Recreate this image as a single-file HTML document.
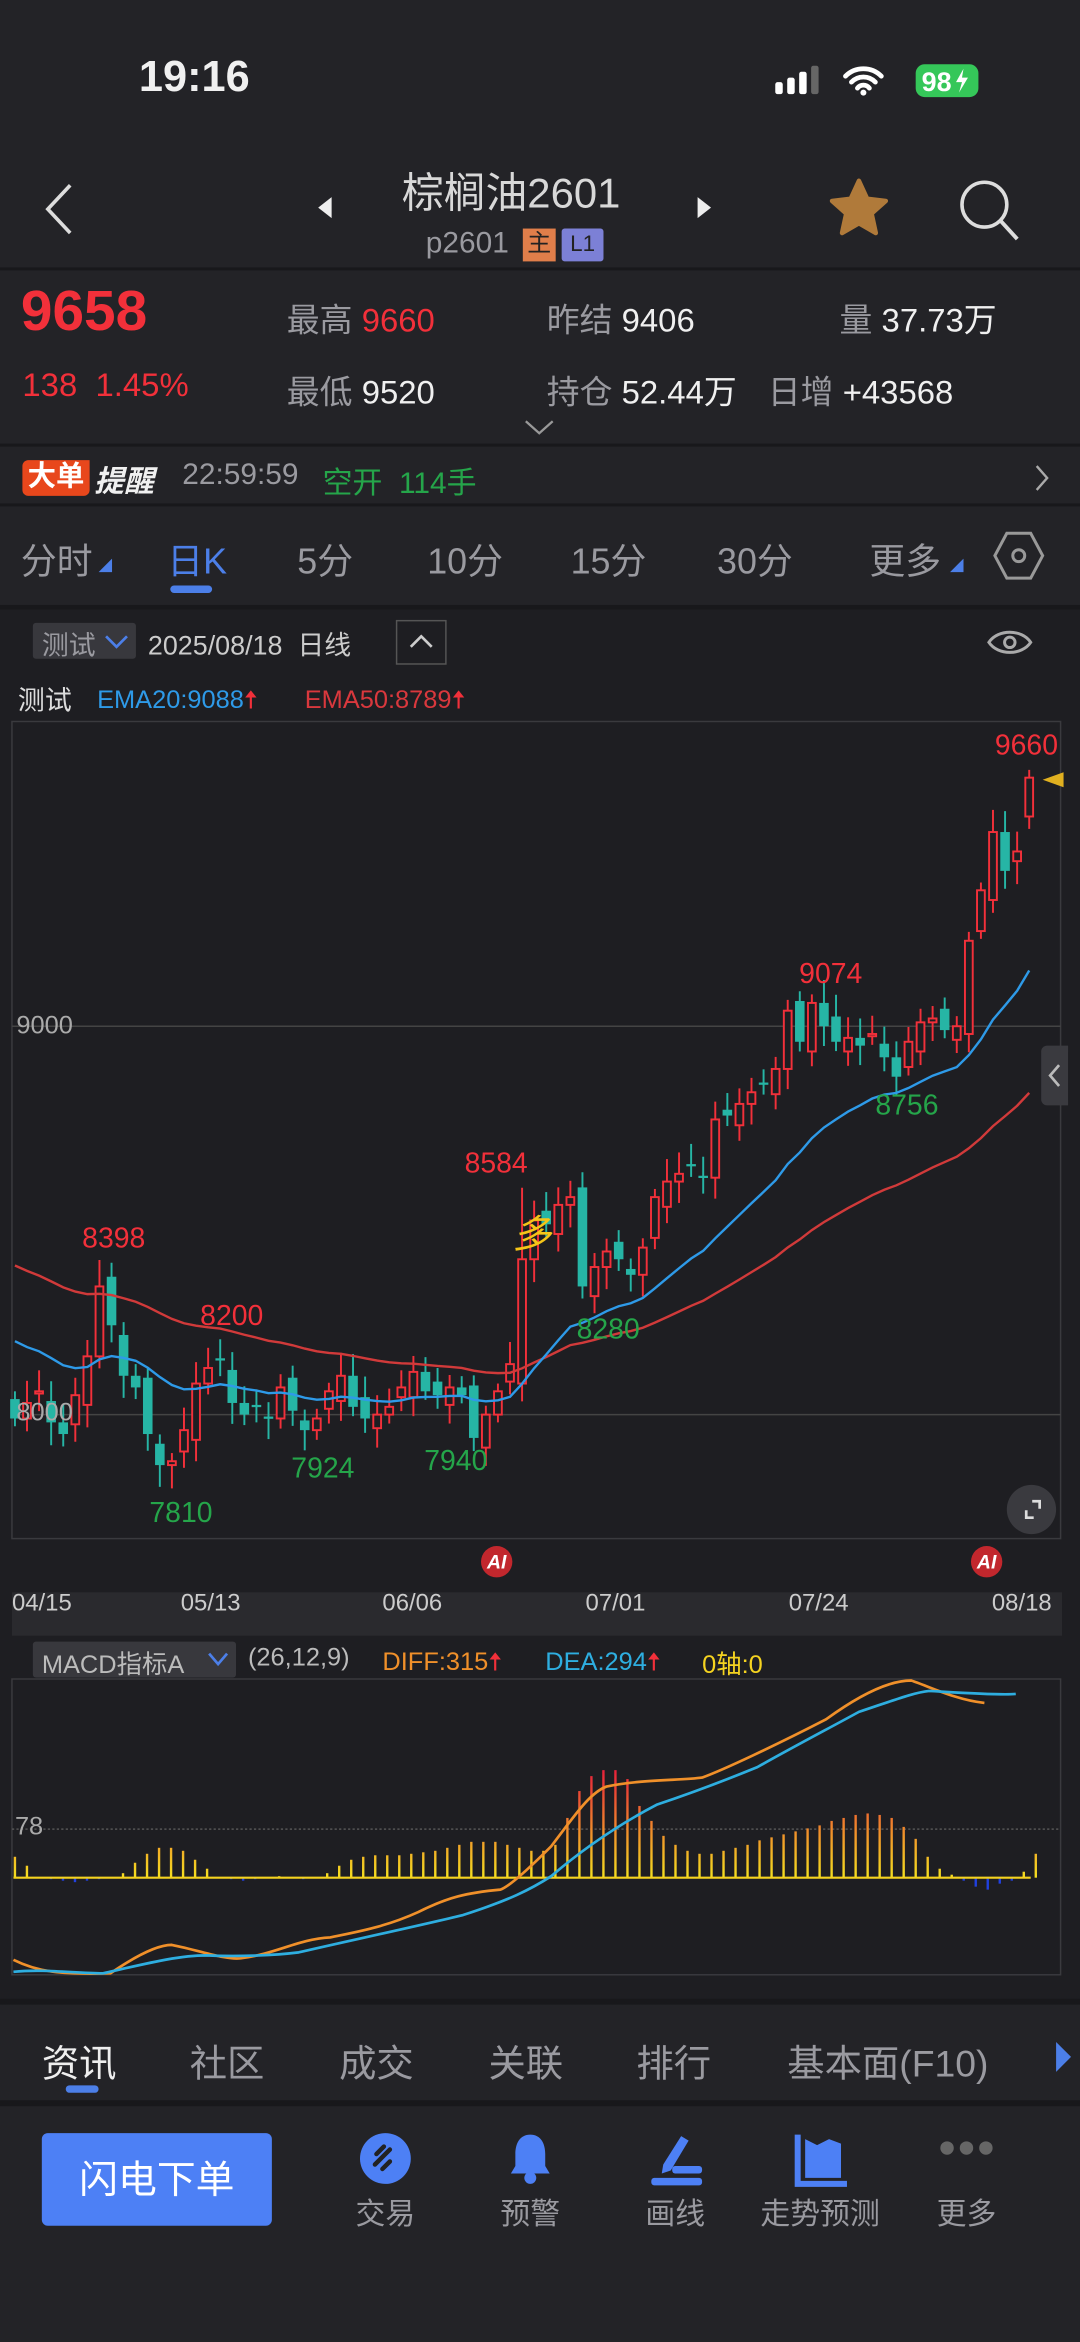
<!DOCTYPE html>
<html><head><meta charset="utf-8">
<style>
html,body{margin:0;padding:0;background:#232327;width:1080px;height:2341px;overflow:hidden}
#r{position:absolute;left:0;top:0;width:723px;height:1568px;transform:scale(1.49378);transform-origin:0 0;font-family:"Liberation Sans","Noto Sans CJK SC",sans-serif;color:#ddd}
.a{position:absolute;white-space:nowrap}
.g{color:#9a9aa0}.w{color:#f0f0f0}.red{color:#f2303a}.grn{color:#25a54a}
.hl{position:absolute;left:0;width:723px;height:2px;background:#18181b}
</style></head><body><div id="r">
<div class="a w" style="left:93px;top:36px;font-size:29px;font-weight:bold">19:16</div>
<svg class="a" style="left:518px;top:42px" width="150" height="24">
<g fill="#fff"><rect x="1" y="13" width="5" height="8" rx="1.5"/><rect x="9" y="10" width="5" height="11" rx="1.5"/><rect x="17" y="6" width="5" height="15" rx="1.5"/><rect x="25" y="2" width="5" height="19" rx="1.5" fill="#666"/></g>
<path d="M48 9a17 17 0 0 1 24 0M52 13a11 11 0 0 1 16 0M56 17a5 5 0 0 1 8 0" stroke="#fff" stroke-width="3.2" fill="none" stroke-linecap="round"/><circle cx="60" cy="20" r="2" fill="#fff"/>
<rect x="95" y="1" width="42" height="22" rx="6" fill="#35c759"/><text x="99" y="19" font-size="18" font-weight="bold" fill="#fff" font-family="Liberation Sans">98</text><path d="M127 4l-5 9h4l-2 7 6-10h-4z" fill="#fff"/>
</svg>
<svg class="a" style="left:28px;top:122px" width="24" height="36"><path d="M19 2L4 18l15 16" stroke="#ddd" stroke-width="2.4" fill="none"/></svg>
<svg class="a" style="left:212px;top:131px" width="12" height="16"><path d="M10 1v14L1 8z" fill="#eee"/></svg>
<svg class="a" style="left:466px;top:131px" width="12" height="16"><path d="M1 1v14l9-7z" fill="#eee"/></svg>
<div class="a" style="left:269px;top:108px;font-size:28px;color:#d8d8d8">棕榈油2601</div>
<div class="a g" style="left:285px;top:152px;font-size:20px">p2601</div>
<div class="a" style="left:350px;top:153px;width:22px;height:22px;background:#e07e4a;color:#222;font-size:16px;text-align:center;line-height:22px">主</div>
<div class="a" style="left:376px;top:153px;width:28px;height:22px;background:#7c80d6;color:#222;font-size:15px;text-align:center;line-height:22px;border-radius:2px">L1</div>
<svg class="a" style="left:554px;top:118px" width="42" height="42"><path d="M21 3l5.5 12 12.5 1.5-9.5 8.5 2.8 13L21 31.5 9.7 38l2.8-13L3 16.5 15.5 15z" fill="#b07a3a" stroke="#b07a3a" stroke-width="3" stroke-linejoin="round"/></svg>
<svg class="a" style="left:640px;top:118px" width="46" height="46"><circle cx="19" cy="19" r="15" stroke="#ddd" stroke-width="2.4" fill="none"/><path d="M30 30l11 12" stroke="#ddd" stroke-width="2.6"/></svg>
<div class="hl" style="top:179px"></div>
<div class="a red" style="left:14px;top:188px;font-size:38px;font-weight:bold">9658</div>
<div class="a red" style="left:15px;top:245px;font-size:22px">138&nbsp;&nbsp;1.45%</div>
<div class="a" style="left:192px;top:197px;font-size:22px"><span class="g">最高</span> <span class="red">9660</span></div>
<div class="a" style="left:192px;top:245px;font-size:22px"><span class="g">最低</span> <span class="w">9520</span></div>
<div class="a" style="left:366px;top:197px;font-size:22px"><span class="g">昨结</span> <span class="w">9406</span></div>
<div class="a" style="left:366px;top:245px;font-size:22px"><span class="g">持仓</span> <span class="w">52.44万</span></div>
<div class="a" style="left:562px;top:197px;font-size:22px"><span class="g">量</span> <span class="w">37.73万</span></div>
<div class="a" style="left:514px;top:245px;font-size:22px"><span class="g">日增</span> <span class="w">+43568</span></div>
<svg class="a" style="left:351px;top:280px" width="20" height="12"><path d="M1 2l9 8 9-8" stroke="#999" stroke-width="1.5" fill="none"/></svg>
<div class="hl" style="top:297px"></div>
<div class="a" style="left:15px;top:308px;width:45px;height:24px;background:#e8471c;color:#fff;font-size:19px;line-height:24px;font-weight:bold;border-radius:4px 0 4px 4px;text-align:center">大单</div>
<div class="a w" style="left:63px;top:306px;font-size:20px;font-weight:bold;font-style:italic">提醒</div>
<div class="a g" style="left:122px;top:307px;font-size:20px">22:59:59</div>
<div class="a grn" style="left:216px;top:307px;font-size:20px">空开&nbsp;&nbsp;114手</div>
<svg class="a" style="left:692px;top:310px" width="12" height="20"><path d="M2 2l7 8-7 8" stroke="#aaa" stroke-width="1.6" fill="none"/></svg>
<div class="hl" style="top:337px"></div>
<div class="a g" style="left:14px;top:356px;font-size:24px">分时</div>
<svg class="a" style="left:66px;top:374px" width="10" height="10"><path d="M9 0v9H0z" fill="#4c7fe8"/></svg>
<div class="a" style="left:112px;top:356px;font-size:24px;color:#4c7fe8">日K</div>
<div class="a" style="left:114px;top:392px;width:28px;height:5px;border-radius:3px;background:#4c7fe8"></div>
<div class="a g" style="left:199px;top:356px;font-size:24px">5分</div>
<div class="a g" style="left:286px;top:356px;font-size:24px">10分</div>
<div class="a g" style="left:382px;top:356px;font-size:24px">15分</div>
<div class="a g" style="left:480px;top:356px;font-size:24px">30分</div>
<div class="a g" style="left:582px;top:356px;font-size:24px">更多</div>
<svg class="a" style="left:636px;top:374px" width="10" height="10"><path d="M9 0v9H0z" fill="#4c7fe8"/></svg>
<svg class="a" style="left:664px;top:354px" width="36" height="36"><path d="M10 3h16l8 15-8 15H10L2 18z" stroke="#999" stroke-width="2" fill="none"/><circle cx="18" cy="18" r="4" stroke="#999" stroke-width="2" fill="none"/></svg>
<div class="hl" style="top:405px;height:3px"></div>
<div class="a" style="left:0;top:408px;width:723px;height:930px;background:#1e1e22"></div>
<div class="a" style="left:22px;top:417px;width:69px;height:24px;background:#38383d;border-radius:2px"></div>
<div class="a g" style="left:28px;top:418px;font-size:18px">测试</div>
<svg class="a" style="left:69px;top:424px" width="18" height="12"><path d="M2 2l7 7 7-7" stroke="#4c7fe8" stroke-width="1.8" fill="none"/></svg>
<div class="a" style="left:99px;top:418px;font-size:18px;color:#ccc">2025/08/18&nbsp;&nbsp;日线</div>
<div class="a" style="left:265px;top:415px;width:32px;height:28px;border:1px solid #555"></div>
<svg class="a" style="left:272px;top:422px" width="20" height="14"><path d="M3 11l7-7 7 7" stroke="#ccc" stroke-width="1.8" fill="none"/></svg>
<svg class="a" style="left:660px;top:418px" width="32" height="24"><path d="M2 12C8 3 24 3 30 12 24 21 8 21 2 12z" stroke="#aaa" stroke-width="2" fill="none"/><circle cx="16" cy="12" r="3.5" stroke="#aaa" stroke-width="2" fill="none"/></svg>
<div class="a" style="left:12px;top:455px;font-size:18px;color:#ddd">测试</div>
<div class="a" style="left:65px;top:456px;font-size:17px;color:#2e9ae8">EMA20:9088<span style="color:#f2303a">🠅</span></div>
<div class="a" style="left:204px;top:456px;font-size:17px;color:#d9383d">EMA50:8789<span style="color:#f2303a">🠅</span></div>
<svg id="ch" class="a" style="left:0;top:0" width="723" height="1568"></svg>
<div class="a" style="left:11px;top:677px;font-size:17px;color:#aaa">9000</div>
<div class="a" style="left:11px;top:936px;font-size:17px;color:#aaa">8000</div>
<div class="a red" style="left:666px;top:489px;font-size:19px">9660</div>
<div class="a red" style="left:55px;top:819px;font-size:19px">8398</div>
<div class="a red" style="left:134px;top:871px;font-size:19px">8200</div>
<div class="a red" style="left:311px;top:769px;font-size:19px">8584</div>
<div class="a red" style="left:535px;top:642px;font-size:19px">9074</div>
<div class="a grn" style="left:100px;top:1003px;font-size:19px">7810</div>
<div class="a grn" style="left:195px;top:973px;font-size:19px">7924</div>
<div class="a grn" style="left:284px;top:968px;font-size:19px">7940</div>
<div class="a grn" style="left:386px;top:880px;font-size:19px">8280</div>
<div class="a grn" style="left:586px;top:730px;font-size:19px">8756</div>
<div class="a" style="left:343px;top:806px;font-size:26px;color:#f5c518;font-style:italic">多</div>
<div class="a" style="left:697px;top:700px;width:18px;height:40px;background:#3a3a3f;border-radius:4px 0 0 4px"></div>
<svg class="a" style="left:700px;top:710px" width="12" height="20"><path d="M9 3L3 10l6 7" stroke="#bbb" stroke-width="1.8" fill="none"/></svg>
<div class="a" style="left:674px;top:994px;width:33px;height:33px;border-radius:50%;background:#3a3a3f"></div>
<svg class="a" style="left:681px;top:1001px" width="20" height="20"><path d="M6 10v5h5M10 4h5v5" stroke="#ddd" stroke-width="1.8" fill="none"/></svg>
<div class="a" style="left:322px;top:1035px;width:21px;height:21px;border-radius:50%;background:#c2272d;color:#fff;font-size:13px;font-weight:bold;font-style:italic;text-align:center;line-height:21px">AI</div>
<div class="a" style="left:650px;top:1035px;width:21px;height:21px;border-radius:50%;background:#c2272d;color:#fff;font-size:13px;font-weight:bold;font-style:italic;text-align:center;line-height:21px">AI</div>
<div class="a" style="left:8px;top:1066px;width:703px;height:29px;background:#2a2a2e"></div>
<div class="a" style="left:8px;top:1065px;font-size:16px;color:#ccc">04/15</div>
<div class="a" style="left:121px;top:1065px;font-size:16px;color:#ccc">05/13</div>
<div class="a" style="left:256px;top:1065px;font-size:16px;color:#ccc">06/06</div>
<div class="a" style="left:392px;top:1065px;font-size:16px;color:#ccc">07/01</div>
<div class="a" style="left:528px;top:1065px;font-size:16px;color:#ccc">07/24</div>
<div class="a" style="left:664px;top:1065px;font-size:16px;color:#ccc">08/18</div>
<div class="a" style="left:22px;top:1099px;width:136px;height:24px;background:#38383d;border-radius:2px"></div>
<div class="a" style="left:28px;top:1100px;font-size:17px;color:#bbb">MACD指标A</div>
<svg class="a" style="left:138px;top:1105px" width="16" height="12"><path d="M2 2l6 7 6-7" stroke="#4c7fe8" stroke-width="1.8" fill="none"/></svg>
<div class="a" style="left:166px;top:1100px;font-size:17px;color:#bbb">(26,12,9)</div>
<div class="a" style="left:256px;top:1100px;font-size:17px;color:#f0902a">DIFF:315<span style="color:#f2303a">🠅</span></div>
<div class="a" style="left:365px;top:1100px;font-size:17px;color:#2eaee0">DEA:294<span style="color:#f2303a">🠅</span></div>
<div class="a" style="left:470px;top:1100px;font-size:17px;color:#f5d320">0轴:0</div>
<div class="a" style="left:10px;top:1213px;font-size:17px;color:#aaa">78</div>
<div class="a" style="left:0;top:1338px;width:723px;height:4px;background:#18181b"></div>
<div class="a" style="left:28px;top:1362px;font-size:25px;color:#eee">资讯</div>
<div class="a g" style="left:127px;top:1362px;font-size:25px">社区</div>
<div class="a g" style="left:227px;top:1362px;font-size:25px">成交</div>
<div class="a g" style="left:327px;top:1362px;font-size:25px">关联</div>
<div class="a g" style="left:426px;top:1362px;font-size:25px">排行</div>
<div class="a g" style="left:527px;top:1362px;font-size:25px">基本面(F10)</div>
<svg class="a" style="left:706px;top:1366px" width="12" height="22"><path d="M1 1v20l10-10z" fill="#4c7fe8"/></svg>
<div class="a" style="left:44px;top:1396px;width:22px;height:5px;border-radius:3px;background:#4c7fe8"></div>
<div class="a" style="left:0;top:1406px;width:723px;height:4px;background:#18181b"></div>
<div class="a" style="left:28px;top:1428px;width:154px;height:62px;background:#4d80f5;border-radius:4px;color:#fff;font-size:26px;text-align:center;line-height:62px">闪电下单</div>
<svg class="a" style="left:240px;top:1427px" width="36" height="36"><circle cx="18" cy="18" r="17" fill="#4d80f5"/><path d="M12 15l5-5M11 22l10-10M16 25l5-5" stroke="#222" stroke-width="3" stroke-linecap="round"/></svg>
<svg class="a" style="left:337px;top:1426px" width="36" height="40"><path d="M18 3c-7 0-10 6-10 13v8l-3 5h26l-3-5v-8c0-7-3-13-10-13z" fill="#4d80f5"/><circle cx="18" cy="32" r="4" fill="#4d80f5"/></svg>
<svg class="a" style="left:434px;top:1426px" width="40" height="40"><path d="M22 4l5 3-12 20-6 2 1-6z" fill="#4d80f5"/><rect x="2" y="32" width="34" height="5" rx="2" fill="#4d80f5"/><rect x="16" y="24" width="20" height="5" rx="2" fill="#4d80f5"/></svg>
<svg class="a" style="left:530px;top:1426px" width="40" height="40"><path d="M4 3v33h33" stroke="#4d80f5" stroke-width="4" fill="none"/><path d="M9 6l8 4 8-4 8 3v23H9z" fill="#4d80f5"/></svg>
<svg class="a" style="left:628px;top:1432px" width="40" height="12"><circle cx="6" cy="6" r="4.5" fill="#666"/><circle cx="19" cy="6" r="4.5" fill="#666"/><circle cx="32" cy="6" r="4.5" fill="#666"/></svg>
<div class="a g" style="left:238px;top:1466px;font-size:20px">交易</div>
<div class="a g" style="left:335px;top:1466px;font-size:20px">预警</div>
<div class="a g" style="left:432px;top:1466px;font-size:20px">画线</div>
<div class="a g" style="left:509px;top:1466px;font-size:20px">走势预测</div>
<div class="a g" style="left:627px;top:1466px;font-size:20px">更多</div>
</div>
<script>
var C=[7990,8030,8060,7980,7950,8050,8150,8330,8230,8100,8070,7950,7870,7880,7960,8080,8120,8140,8030,8000,8020,7990,8070,8010,7960,7990,8060,8100,8020,7990,8000,8020,8070,8110,8060,8050,8070,8050,7940,8000,8060,8130,8400,8500,8490,8540,8560,8330,8380,8420,8400,8360,8430,8560,8600,8620,8640,8610,8760,8770,8800,8830,8850,8890,9040,8960,9060,9000,8960,8970,8950,8980,8920,8870,8960,9010,9020,8990,9000,9220,9350,9500,9400,9450,9640];
var n=C.length,st=679/(n-1),Y=function(p){return 687-(p-9000)*0.26};
var s='<defs><linearGradient id="gr" gradientUnits="userSpaceOnUse" x1="0" y1="1185" x2="0" y2="1257"><stop offset="0" stop-color="#e8203a"/><stop offset="1" stop-color="#f5e020"/></linearGradient></defs>';
s+='<rect x="8" y="483" width="702" height="547" fill="none" stroke="#3a3a3e"/>';
s+='<line x1="8" y1="687" x2="710" y2="687" stroke="#444"/><line x1="8" y1="947" x2="710" y2="947" stroke="#444"/>';
var e20=8210,e50=8400,p20='',p50='';
for(var i=0;i<n;i++){var x=10+i*st,c=C[i],o=i?C[i-1]+((i%3)-1)*25:8040;
 if(i==42)o=8080;if(i==79)o=8980;if(i==84)o=9540;
 var h=Math.max(o,c)+20+(i*37%40),l=Math.min(o,c)-20-(i*53%40);
 if(i==42)h=8584;if(i==13)l=7810;if(i==84)h=9660;if(i==7)h=8398;
 var up=c>=o,col=up?'#f2303a':'#26b5a5',t=Y(Math.max(o,c)),b=Y(Math.min(o,c));if(b-t<1.5)b=t+1.5;
 s+='<line x1="'+x+'" y1="'+Y(h)+'" x2="'+x+'" y2="'+Y(l)+'" stroke="'+col+'" stroke-width="1.3"/>';
 s+=up?'<rect x="'+(x-2.6)+'" y="'+t+'" width="5.2" height="'+(b-t)+'" fill="#1e1e22" stroke="'+col+'" stroke-width="1.3"/>':'<rect x="'+(x-3.2)+'" y="'+t+'" width="6.4" height="'+(b-t)+'" fill="'+col+'"/>';
 e20=e20+(c-e20)*2/21;e50=e50+(c-e50)*2/51;p20+=x+','+Y(e20)+' ';p50+=x+','+Y(e50)+' ';}
s+='<polyline points="'+p50+'" fill="none" stroke="#d13a3a" stroke-width="1.6"/>';
s+='<polyline points="'+p20+'" fill="none" stroke="#2e9ae8" stroke-width="1.6"/>';
s+='<path d="M712 517l-14 5 14 5z" fill="#e0b020"/>';
for(var i=0;i<86;i++){s+='<line x1="'+(10+i*8.1)+'" y1="1084" x2="'+(10+i*8.1)+'" y2="1093" stroke="#555"/>';}
s+='<rect x="8" y="1124" width="702" height="198" fill="none" stroke="#3a3a3e"/>';
s+='<line x1="8" y1="1224.5" x2="710" y2="1224.5" stroke="#555" stroke-dasharray="1.5 1.5"/>';
var H=[14,8,0,-1,-2,-3,-2,-1,0,3,10,16,20,20,18,12,6,0,-1,-2,-1,0,1,0,-1,0,3,8,12,14,15,15,15,16,17,18,20,22,24,24,24,22,20,18,18,22,40,58,68,72,72,66,48,38,28,22,18,16,16,18,20,22,25,27,29,31,33,35,38,40,42,43,42,40,34,26,14,6,2,-2,-6,-8,-4,-2,4,16];
for(var i=0;i<H.length;i++){var x=10+i*8.04,v=H[i];
 if(v>0)s+='<rect x="'+(x-0.8)+'" y="'+(1257-v)+'" width="1.6" height="'+v+'" fill="url(#gr)"/>';
 else if(v<0)s+='<rect x="'+(x-0.8)+'" y="1257" width="1.6" height="'+(-v)+'" fill="#2040e0"/>';}
s+='<line x1="9" y1="1257" x2="690" y2="1257" stroke="#f5d320" stroke-width="1.4"/>';
s+='<path d="M9 1312C25 1320 40 1322 74 1321 90 1310 105 1302 115 1302 135 1306 150 1312 161 1311 185 1308 200 1298 221 1297 240 1293 258 1290 280 1280 300 1270 313 1267 335 1265 341 1263 355 1250 369 1236 385 1215 395 1200 406 1196 430 1191 456 1192 470 1190 484 1185 520 1168 553 1151 575 1135 595 1125 610 1125 622 1129 640 1138 659 1140 675 1138 689 1126" fill="none" stroke="#f0902a" stroke-width="1.8"/>';
s+='<path d="M9 1320C30 1318 50 1321 69 1321 100 1314 120 1309 138 1309 160 1310 184 1309 200 1307 230 1300 277 1290 310 1282 341 1272 355 1265 369 1256 390 1238 415 1221 440 1208 461 1201 485 1192 507 1183 530 1170 553 1158 575 1146 599 1138 612 1133 622 1132 640 1133 669 1135 680 1134 689 1133" fill="none" stroke="#2eaee0" stroke-width="1.8"/>';
document.getElementById('ch').innerHTML=s;
</script>
</body></html>
